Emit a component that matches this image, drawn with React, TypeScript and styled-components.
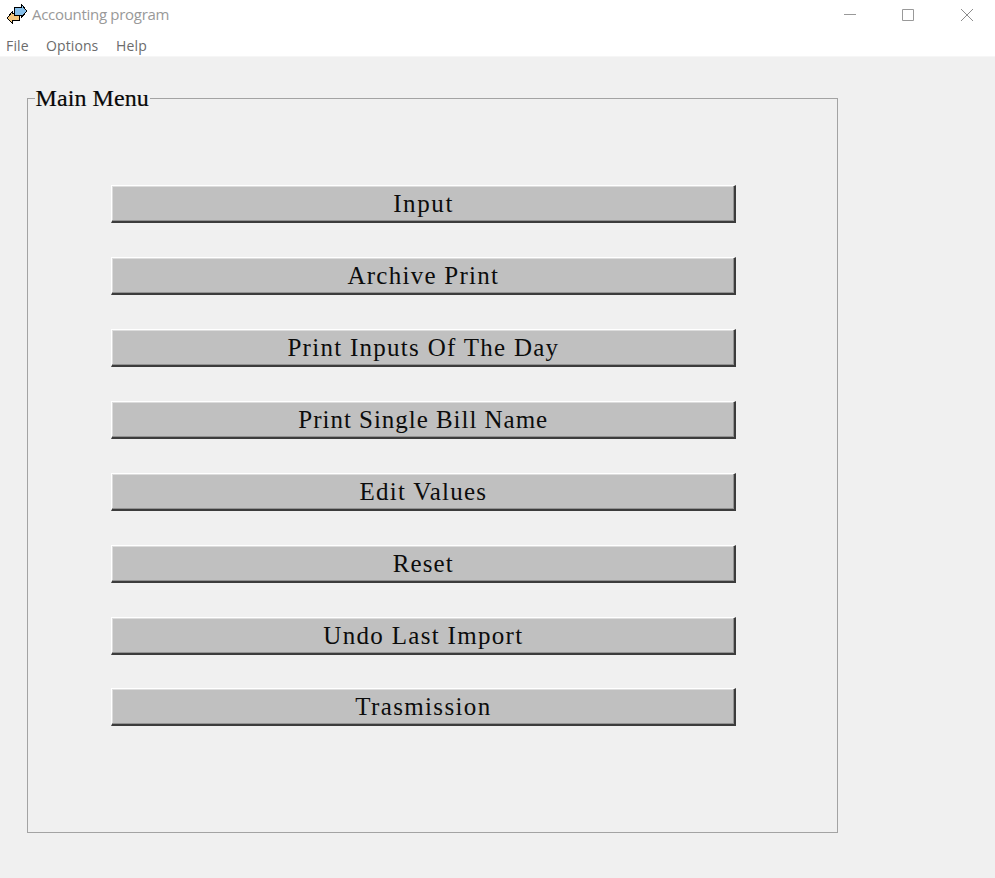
import React from "react";
import styled, { createGlobalStyle } from "styled-components";

const GlobalStyle = createGlobalStyle`
  * { box-sizing: border-box; }
  html, body { margin: 0; height: 100%; background: #f0f0f0; overflow: hidden; }
`;

const Window = styled.div`
  width: 995px;
  height: 878px;
  display: flex;
  flex-direction: column;
  background: #f0f0f0;
`;

const TitleBar = styled.header`
  height: 30px;
  display: flex;
  align-items: center;
  background: #fff;
  padding-left: 7px;
`;

const Title = styled.h1`
  flex: 1;
  margin: 0 0 2px 5px;
  font: 400 15px/20px "Open Sans", sans-serif;
  letter-spacing: -0.3px;
  color: #999;
`;

const Controls = styled.div`
  display: flex;
`;

const ControlButton = styled.button`
  width: 58px;
  height: 30px;
  padding: 0 0 0 2px;
  border: 0;
  background: none;
  display: flex;
  align-items: center;
  justify-content: center;

  &:last-child { width: 59px; }
`;

const MenuBar = styled.nav`
  height: 27px;
  display: flex;
  gap: 17px;
  padding: 6px 0 0 6px;
  background: #fff;
  border-bottom: 1px solid #f6f6f6;
`;

const MenuItem = styled.span<{ $width: number; $tracking: number }>`
  width: ${(p) => p.$width}px;
  white-space: nowrap;
  font: 400 14px/20px "Open Sans", sans-serif;
  letter-spacing: ${(p) => p.$tracking}px;
  color: #6c6c6c;
`;

const Group = styled.fieldset`
  width: 811px;
  height: 748px;
  margin: 28px 0 0 27px;
  padding: 0 0 0 7px;
  border: 1px solid #a3a3a3;
  min-inline-size: 0;
`;

const Legend = styled.legend`
  height: 26px;
  width: 115px;
  padding: 0 0 0 0.5px;
  white-space: nowrap;
  font: 400 24px/26px "Liberation Serif", serif;
  letter-spacing: 0.08px;
  color: #080808;
  -webkit-text-stroke: 0.2px #080808;
`;

const ButtonList = styled.div`
  width: 625px;
  margin: 74.2px 0 0 76px;
  display: flex;
  flex-direction: column;
  gap: 33.9px;
`;

const MenuButton = styled.button<{ $tracking: number }>`
  height: 38px;
  padding: 1px 0 0;
  border: solid;
  border-width: 1px 2px 2px 1px;
  border-color: #fff #3c3c3c #3c3c3c #fff;
  background: #c0c0c0;
  box-shadow: inset -1px -1px #929292, inset 1px 1px #dcdcdc;
  font: 400 25px/34px "Liberation Serif", serif;
  letter-spacing: ${(p) => p.$tracking}px;
  text-indent: ${(p) => p.$tracking - 0.5}px;
  color: #0c0c0c;
  white-space: nowrap;
`;

const actions = [
  { label: "Input", tracking: 1.6 },
  { label: "Archive Print", tracking: 1.27 },
  { label: "Print Inputs Of The Day", tracking: 1.28 },
  { label: "Print Single Bill Name", tracking: 0.97 },
  { label: "Edit Values", tracking: 1.25 },
  { label: "Reset", tracking: 1.1 },
  { label: "Undo Last Import", tracking: 1.32 },
  { label: "Trasmission", tracking: 1.35 },
];

const menus = [
  { label: "File", width: 23, tracking: 0.15 },
  { label: "Options", width: 53, tracking: 0.1 },
  { label: "Help", width: 32, tracking: 0.15 },
];

const AppIcon = () => (
  <svg width="20" height="22" viewBox="0 0 20 22" shapeRendering="crispEdges">
    <path d="M.5 13.5 5.5 7.5V9.5H12.5V16.5H5.5V19.5L.5 14.5Z" fill="#f5c77d" stroke="#000" />
    <path d="M7.5 3.5H14.5V.5L19.5 6.5V7.5L14.5 13.5V11.5H7.5Z" fill="#86bfea" stroke="#000" />
  </svg>
);

export default function App() {
  return (
    <>
      <GlobalStyle />
      <Window>
        <TitleBar>
          <AppIcon />
          <Title>Accounting program</Title>
          <Controls>
            <ControlButton aria-label="Minimize">
              <svg width="12" height="12"><path d="M0 5.5H12" stroke="#999" /></svg>
            </ControlButton>
            <ControlButton aria-label="Maximize">
              <svg width="12" height="12"><path d="M.5.5H11.5V11.5H.5Z" fill="none" stroke="#999" /></svg>
            </ControlButton>
            <ControlButton aria-label="Close">
              <svg width="12" height="12"><path d="M0 0 12 12M12 0 0 12" stroke="#8c8c8c" /></svg>
            </ControlButton>
          </Controls>
        </TitleBar>
        <MenuBar>
          {menus.map((m) => (
            <MenuItem key={m.label} $width={m.width} $tracking={m.tracking}>{m.label}</MenuItem>
          ))}
        </MenuBar>
        <Group>
          <Legend>Main Menu</Legend>
          <ButtonList>
            {actions.map((a) => (
              <MenuButton key={a.label} $tracking={a.tracking}>{a.label}</MenuButton>
            ))}
          </ButtonList>
        </Group>
      </Window>
    </>
  );
}
